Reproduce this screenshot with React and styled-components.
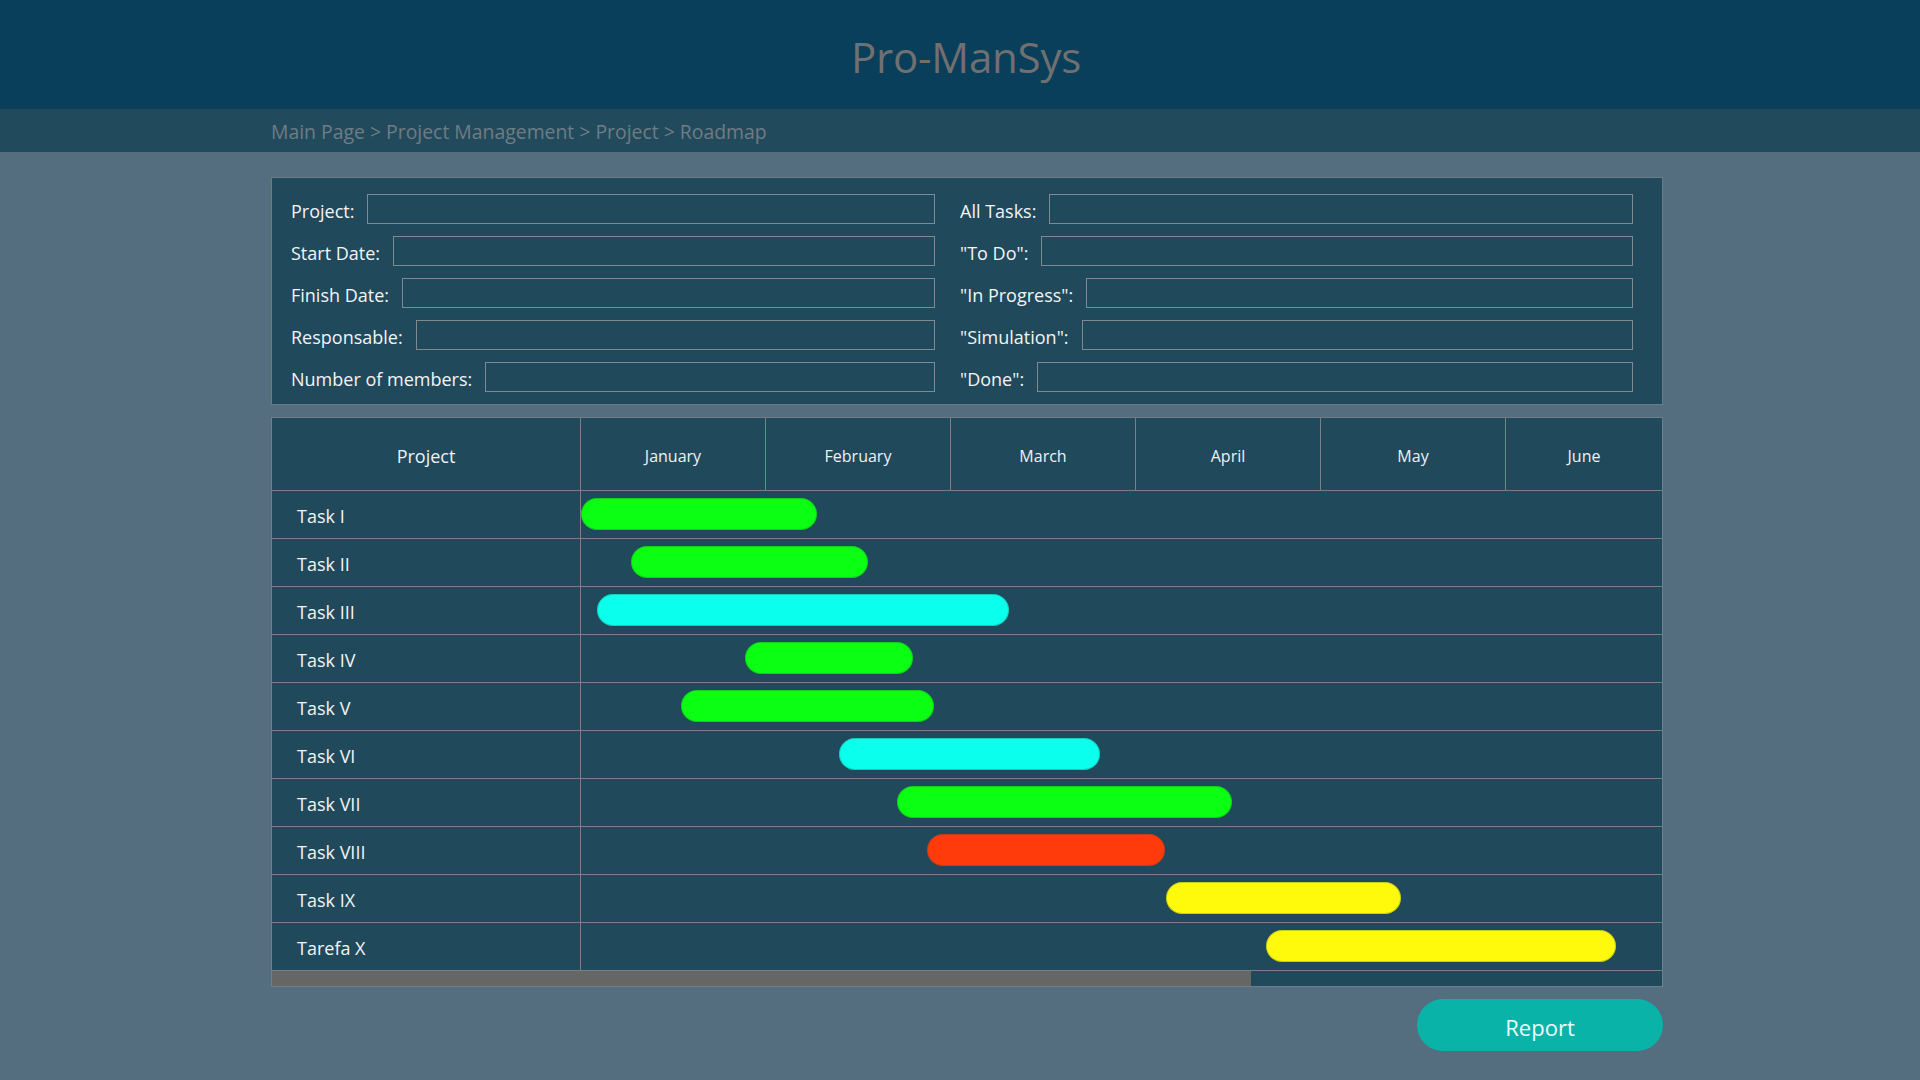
import React from "react";
import styled, { createGlobalStyle } from "styled-components";

const GlobalStyle = createGlobalStyle`
  html, body { margin: 0; padding: 0; }
  body {
    background: #546e80;
    font-family: "Open Sans", "Noto Sans", Arial, sans-serif;
    min-height: 1080px;
  }
  * { box-sizing: border-box; }
`;

const Header = styled.header`
  height: 109px;
  background: #0a3f5c;
  display: flex;
  align-items: center;
  justify-content: center;
`;

const Title = styled.h1`
  margin: 0 0 0 12px;
  padding-top: 4px;
  font-weight: 400;
  font-size: 42px;
  color: #707070;
  letter-spacing: -0.2px;
`;

const Breadcrumb = styled.nav`
  height: 43px;
  background: #224a5d;
  display: flex;
  align-items: center;
  padding: 2px 0 0 271px;
  font-size: 19.4px;
  color: #6f7c84;
`;

const Main = styled.main`
  width: 1392px;
  margin: 25px 0 0 271px;
  display: flex;
  flex-direction: column;
`;

const InfoPanel = styled.section`
  background: #21495c;
  border: 1px solid #687c88;
  padding: 16px 28px 12px 19px;
  display: grid;
  grid-template-columns: 644px 673px;
  column-gap: 25px;
  row-gap: 12px;
  grid-auto-flow: column;
  grid-template-rows: repeat(5, 30px);
`;

const Field = styled.label`
  display: flex;
  align-items: center;
  gap: 13px;
  color: #f2f4f5;
  font-size: 18px;
  white-space: nowrap;
`;

const LabelText = styled.span`
  padding-top: 4px;
`;

const Input = styled.input`
  flex: 1;
  height: 30px;
  min-width: 0;
  background: transparent;
  border: 1px solid #7f8a90;
  outline: none;
  color: #fff;
  font: inherit;
  padding: 0 6px;
`;

const Table = styled.section`
  margin-top: 12px;
  border: 1px solid #6f7f88;
  background: #21495c;
`;

const HeadRow = styled.div`
  display: grid;
  grid-template-columns: 309px repeat(5, 185px) 1fr;
  height: 73px;
  border-bottom: 1px solid #7a7f82;
`;

const HeadCell = styled.div`
  display: flex;
  align-items: center;
  justify-content: center;
  padding-top: 4px;
  border-right: ${(p) => (p.$last ? "none" : "1px solid #7a7f82")};
  color: #eef2f4;
  font-size: ${(p) => (p.$main ? "18px" : "16px")};
`;

const Row = styled.div`
  display: grid;
  grid-template-columns: 309px 1fr;
  height: 48px;
  border-bottom: 1px solid #7a7f82;
`;

const TaskName = styled.div`
  display: flex;
  align-items: center;
  padding: 3px 0 0 25px;
  border-right: 1px solid #7a7f82;
  color: #f2f4f5;
  font-size: 18px;
`;

const Timeline = styled.div`
  position: relative;
`;

const Bar = styled.div`
  position: absolute;
  top: 7px;
  height: 32px;
  border-radius: 16px;
  background: ${(p) => p.$color};
  box-shadow: 0 0 0 1px rgba(40, 70, 60, 0.25) inset;
`;

const ScrollTrack = styled.div`
  height: 15px;
  background: #21495c;
`;

const ScrollThumb = styled.div`
  height: 100%;
  background: #666666;
`;

const Actions = styled.div`
  display: flex;
  justify-content: flex-end;
  margin-top: 12px;
`;

const ReportButton = styled.button`
  width: 246px;
  height: 52px;
  padding-top: 4px;
  border: none;
  border-radius: 26px;
  background: #0ab3a8;
  color: #eafcfb;
  font-family: inherit;
  font-size: 22px;
  cursor: pointer;
`;

const COLORS = {
  green: "#0bff12",
  cyan: "#0affec",
  red: "#ff3b0c",
  yellow: "#fff90c",
};

const months = ["January", "February", "March", "April", "May", "June"];

const tasks = [
  { name: "Task I", start: 0, end: 236, color: "green" },
  { name: "Task II", start: 50, end: 287, color: "green" },
  { name: "Task III", start: 16, end: 428, color: "cyan" },
  { name: "Task IV", start: 164, end: 332, color: "green" },
  { name: "Task V", start: 100, end: 353, color: "green" },
  { name: "Task VI", start: 258, end: 519, color: "cyan" },
  { name: "Task VII", start: 316, end: 651, color: "green" },
  { name: "Task VIII", start: 346, end: 584, color: "red" },
  { name: "Task IX", start: 585, end: 820, color: "yellow" },
  { name: "Tarefa X", start: 685, end: 1035, color: "yellow" },
];

const leftFields = [
  "Project:",
  "Start Date:",
  "Finish Date:",
  "Responsable:",
  "Number of members:",
];
const rightFields = [
  "All Tasks:",
  '"To Do":',
  '"In Progress":',
  '"Simulation":',
  '"Done":',
];

const SCROLL_RATIO = 0.704;

export default function App() {
  return (
    <>
      <GlobalStyle />
      <Header>
        <Title>Pro-ManSys</Title>
      </Header>
      <Breadcrumb>Main Page &gt; Project Management &gt; Project &gt; Roadmap</Breadcrumb>
      <Main>
        <InfoPanel>
          {[...leftFields, ...rightFields].map((f) => (
            <Field key={f}>
              <LabelText>{f}</LabelText>
              <Input type="text" />
            </Field>
          ))}
        </InfoPanel>
        <Table>
          <HeadRow>
            <HeadCell $main>Project</HeadCell>
            {months.map((m, i) => (
              <HeadCell key={m} $last={i === months.length - 1}>
                {m}
              </HeadCell>
            ))}
          </HeadRow>
          {tasks.map((t) => (
            <Row key={t.name}>
              <TaskName>{t.name}</TaskName>
              <Timeline>
                <Bar
                  $color={COLORS[t.color]}
                  style={{ left: t.start, width: t.end - t.start }}
                />
              </Timeline>
            </Row>
          ))}
          <ScrollTrack>
            <ScrollThumb style={{ width: `${SCROLL_RATIO * 100}%` }} />
          </ScrollTrack>
        </Table>
        <Actions>
          <ReportButton>Report</ReportButton>
        </Actions>
      </Main>
    </>
  );
}
